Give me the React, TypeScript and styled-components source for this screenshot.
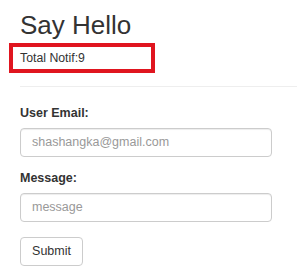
import React from "react";
import styled, { createGlobalStyle } from "styled-components";

const Global = createGlobalStyle`
  html, body { margin: 0; padding: 0; background: #fff; }
  body { font-family: "Liberation Sans", Arial, sans-serif; color: #333; }
  * { box-sizing: border-box; }
`;

const Page = styled.div`
  padding-left: 20px;
  padding-top: 11px;
  width: 297px;
  overflow: hidden;
`;

const Title = styled.h1`
  margin: 0;
  font-size: 26px;
  line-height: 28.6px;
  font-weight: 400;
  color: #333;
`;

const Notif = styled.div`
  margin: 3px 0 0 -11px;
  width: 146px;
  height: 30px;
  border: 4px solid #e0151f;
  padding-left: 7px;
  font-size: 12.3px;
  line-height: 22px;
  color: #333;
`;

const Rule = styled.hr`
  margin: 13px 0 17px 0;
  border: 0;
  border-top: 1px solid #eee;
  width: 300px;
`;

const Group = styled.div`
  margin-bottom: 12px;
`;

const Label = styled.label`
  display: block;
  font-size: 12.5px;
  font-weight: 700;
  line-height: 18px;
  margin-bottom: 6px;
  color: #333;
`;

const Input = styled.input`
  display: block;
  width: 252px;
  height: 29px;
  padding: 0 11px;
  border: 1px solid #ccc;
  border-radius: 4px;
  box-shadow: inset 0 1px 1px rgba(0, 0, 0, 0.075);
  font-family: "Liberation Sans", Arial, sans-serif;
  font-size: 12.5px;
  color: #555;
  outline: none;
  &::placeholder { color: #999; }
`;

const Button = styled.button`
  margin-top: 3px;
  width: 63px;
  height: 29px;
  padding: 0;
  background: #fff;
  border: 1px solid #ccc;
  border-radius: 4px;
  font-family: "Liberation Sans", Arial, sans-serif;
  font-size: 12.5px;
  color: #333;
`;

export default function App() {
  return (
    <Page>
      <Global />
      <Title>Say Hello</Title>
      <Notif>Total Notif:9</Notif>
      <Rule />
      <Group>
        <Label>User Email:</Label>
        <Input placeholder="shashangka@gmail.com" />
      </Group>
      <Group>
        <Label>Message:</Label>
        <Input placeholder="message" />
      </Group>
      <Button>Submit</Button>
    </Page>
  );
}
